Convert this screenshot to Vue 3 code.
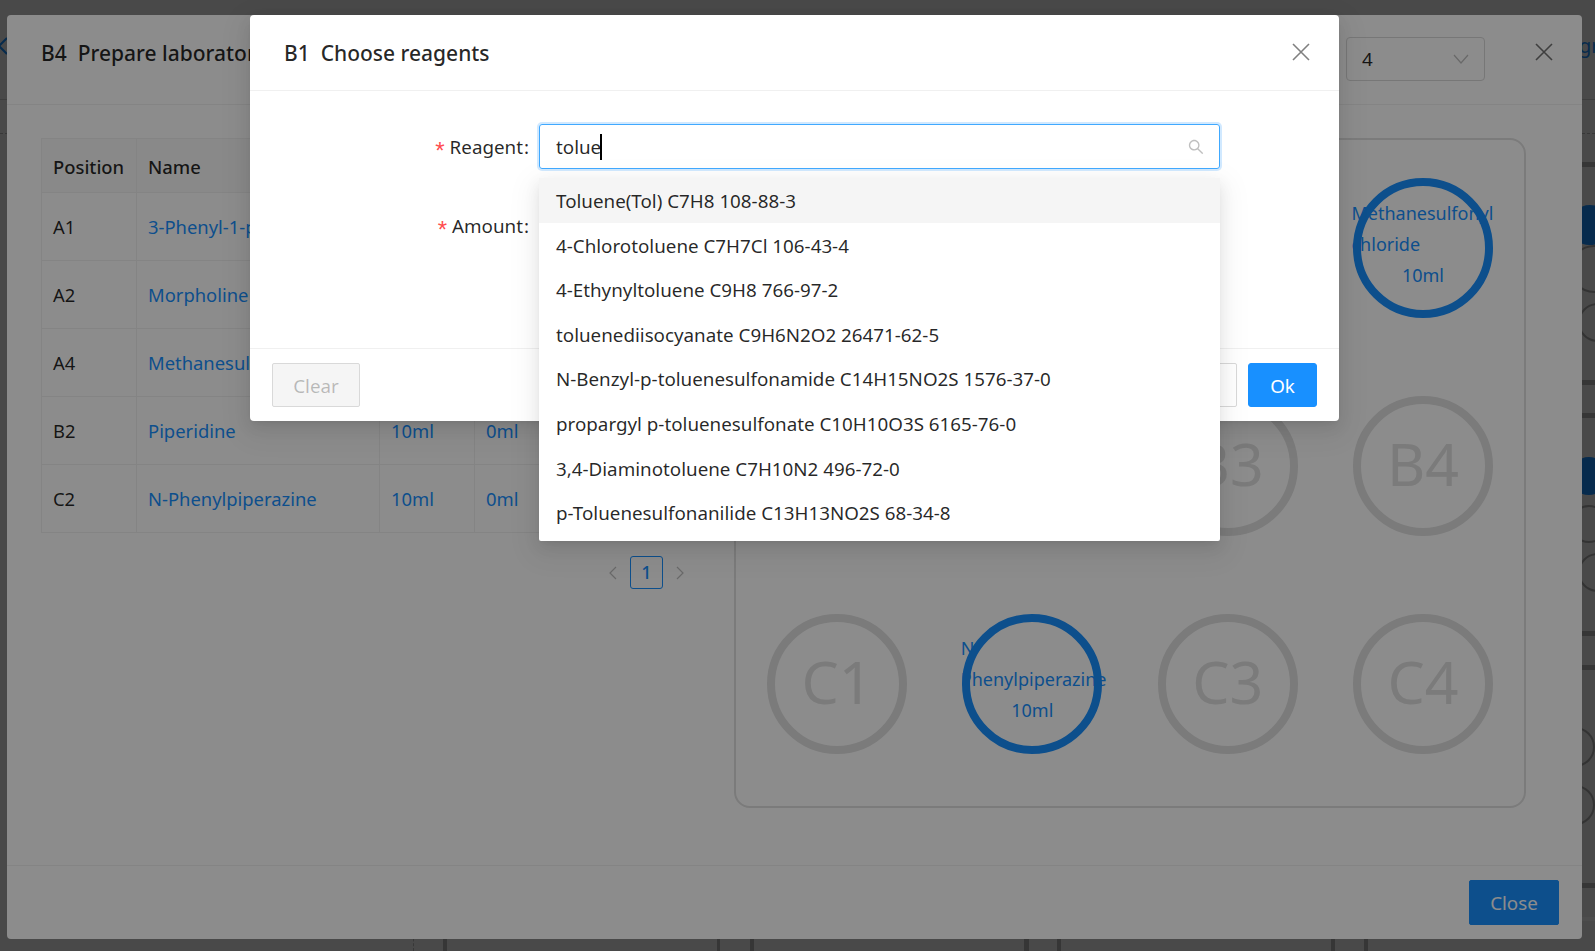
<template>
  <div class="page">
    <!-- page behind the dialogs, only its edges show -->
    <div class="flow">
      <span class="flow-back">
        <svg width="12" height="20" viewBox="0 0 12 20"><polyline points="10,2 2,10 10,18" fill="none" stroke="#1890ff" stroke-width="2" /></svg>
      </span>
      <span class="flow-link">Program</span>
      <div class="flow-line" />
      <div class="flow-dash" />
      <div class="flow-dash-v" />
      <div class="flow-band" />
      <div v-for="(b, i) in bars" :key="'b' + i" class="flow-bar" :style="{ left: b[0] + 'px', top: b[1] + 'px', width: b[2] + 'px', height: b[3] + 'px' }" />
      <div v-for="(d, i) in dots" :key="'d' + i" class="flow-dot" :class="{ on: d[2] }" :style="{ left: d[0] + 'px', top: d[1] + 'px', width: d[3] + 'px', height: d[3] + 'px' }" />
    </div>
    <div class="mask" />

    <div class="modal outer">
      <div class="outer-head">
        <div class="title">B4&nbsp; Prepare laboratory reagents</div>
        <div class="select">
          <span>4</span>
          <svg width="16" height="10" viewBox="0 0 16 10"><polyline points="1,1 8,9 15,1" fill="none" stroke="#bfbfbf" stroke-width="1.2" /></svg>
        </div>
        <svg class="close" width="18" height="18" viewBox="0 0 18 18"><path d="M1 1 L17 17 M17 1 L1 17" stroke="#737373" stroke-width="1.6" fill="none" /></svg>
      </div>
      <div class="outer-body">
        <div class="left">
          <table class="table">
            <thead>
              <tr>
                <th class="c1">Position</th>
                <th class="c2">Name</th>
                <th class="c3">Total</th>
                <th class="c3">Used</th>
                <th>Action</th>
              </tr>
            </thead>
            <tbody>
              <tr v-for="r in rows" :key="r.pos">
                <td>{{ r.pos }}</td>
                <td class="link">{{ r.name }}</td>
                <td class="link">10ml</td>
                <td class="link">0ml</td>
                <td class="link">Edit</td>
              </tr>
            </tbody>
          </table>
          <div class="pager">
            <svg width="12" height="14" viewBox="0 0 12 14"><polyline points="9,1 3,7 9,13" fill="none" stroke="#bfbfbf" stroke-width="1.2" /></svg>
            <span class="pager-item">1</span>
            <svg width="12" height="14" viewBox="0 0 12 14"><polyline points="3,1 9,7 3,13" fill="none" stroke="#bfbfbf" stroke-width="1.2" /></svg>
          </div>
        </div>
        <div class="plate">
          <div v-for="w in wells" :key="w.pos" class="well" :class="{ filled: w.name }">
            <template v-if="w.name">
              <div class="well-name">{{ w.name }}</div>
              <div class="well-vol">10ml</div>
            </template>
            <span v-else class="well-pos">{{ w.pos }}</span>
          </div>
        </div>
      </div>
      <div class="outer-foot">
        <button class="btn primary">Close</button>
      </div>
    </div>

    <div class="mask" />

    <div class="modal inner">
      <div class="inner-head">
        <div class="title">B1&nbsp; Choose reagents</div>
        <svg class="close" width="18" height="18" viewBox="0 0 18 18"><path d="M1 1 L17 17 M17 1 L1 17" stroke="#808080" stroke-width="1.6" fill="none" /></svg>
      </div>
      <div class="form">
        <label class="form-label"><i>*</i>Reagent<b>:</b></label>
        <div class="input focus">
          <span>tolue</span><span class="caret" />
          <svg class="search" width="16" height="16" viewBox="64 64 896 896" fill="#bfbfbf">
            <path d="M909.6 854.5L649.9 594.8C690.2 542.7 712 479 712 412c0-80.2-31.3-155.4-87.9-212.1-56.6-56.7-132-87.9-212.1-87.9s-155.5 31.3-212.1 87.9C143.2 256.5 112 331.8 112 412c0 80.1 31.3 155.5 87.9 212.1C256.5 680.8 331.8 712 412 712c67 0 130.6-21.8 182.7-62l259.7 259.6a8.2 8.2 0 0 0 11.6 0l43.6-43.5a8.2 8.2 0 0 0 0-11.6zM570.4 570.4C528 612.7 471.8 636 412 636s-116-23.3-158.4-65.6C211.3 528 188 471.8 188 412s23.3-116.1 65.6-158.4C296 211.3 352.2 188 412 188s116.1 23.2 158.4 65.6S636 352.2 636 412s-23.3 116.1-65.6 158.4z" />
          </svg>
        </div>
        <label class="form-label"><i>*</i>Amount<b>:</b></label>
        <div class="input" />
      </div>
      <div class="inner-foot">
        <button class="btn disabled">Clear</button>
        <div class="foot-right">
          <button class="btn">Cancel</button>
          <button class="btn ok">Ok</button>
        </div>
      </div>
    </div>

    <div class="dropdown">
      <div v-for="(o, i) in options" :key="o" class="option" :class="{ active: i === 0 }">{{ o }}</div>
    </div>
  </div>
</template>

<script setup>
const rows = [
  { pos: 'A1', name: '3-Phenyl-1-propanol' },
  { pos: 'A2', name: 'Morpholine' },
  { pos: 'A4', name: 'Methanesulfonyl chloride' },
  { pos: 'B2', name: 'Piperidine' },
  { pos: 'C2', name: 'N-Phenylpiperazine' }
]

const wells = ['A', 'B', 'C'].flatMap((l) =>
  [1, 2, 3, 4].map((n) => {
    const pos = l + n
    const row = rows.find((r) => r.pos === pos)
    return { pos, name: row ? row.name : '' }
  })
)

const options = [
  'Toluene(Tol) C7H8 108-88-3',
  '4-Chlorotoluene C7H7Cl 106-43-4',
  '4-Ethynyltoluene C9H8 766-97-2',
  'toluenediisocyanate C9H6N2O2 26471-62-5',
  'N-Benzyl-p-toluenesulfonamide C14H15NO2S 1576-37-0',
  'propargyl p-toluenesulfonate C10H10O3S 6165-76-0',
  '3,4-Diaminotoluene C7H10N2 496-72-0',
  'p-Toluenesulfonanilide C13H13NO2S 68-34-8'
]

// connector bars of the flow chart behind the dialogs: left, top, width, height
const bars = [
  [1582, 162, 13, 5], [1582, 380, 13, 5], [1582, 413, 13, 5],
  [1582, 631, 13, 5], [1582, 665, 13, 5], [1582, 883, 13, 5],
  [443, 939, 4, 12], [717, 939, 3, 12], [750, 939, 4, 12],
  [1024, 939, 5, 12], [1057, 939, 4, 12], [1331, 939, 4, 12], [1364, 939, 4, 12]
]
// left, top, filled, diameter
const dots = [
  [1570, 205, true, 40], [1570, 457, true, 38],
  [1570, 245, false, 48], [1578, 303, false, 39],
  [1570, 505, false, 38], [1578, 553, false, 39],
  [1555, 727, false, 40], [1555, 785, false, 40]
]
</script>

<style>
html, body {
  margin: 0;
  background: #fff;
}
</style>

<style scoped>
.page {
  position: relative;
  width: 1595px;
  height: 951px;
  overflow: hidden;
  background: #f2f2f2;
  font-family: "Noto Sans", "Open Sans", sans-serif;
  font-size: 18.8px;
  color: rgba(0, 0, 0, 0.85);
}

.flow {
  position: absolute;
  inset: 0;
}
.flow-back {
  position: absolute;
  left: -3px;
  top: 36px;
}
.flow-link {
  position: absolute;
  left: 1547px;
  top: 32px;
  font-size: 20px;
  color: #1890ff;
  white-space: nowrap;
}
.flow-line {
  position: absolute;
  left: 0;
  right: 0;
  top: 99px;
  height: 1px;
  background: #d0d0d0;
}
.flow-dash {
  position: absolute;
  left: 0;
  right: 0;
  top: 133px;
  border-top: 1px dashed #bbb;
}
.flow-dash-v {
  position: absolute;
  left: 413px;
  top: 900px;
  bottom: 0;
  border-left: 1px dashed #bbb;
}
.flow-band {
  position: absolute;
  left: 1582px;
  right: 0;
  top: 917px;
  height: 4px;
  background: #fff;
}
.flow-bar {
  position: absolute;
  background: #b4b4b4;
}
.flow-dot {
  position: absolute;
  box-sizing: border-box;
  border: 2px solid #aaa;
  border-radius: 50%;
}
.flow-dot.on {
  background: #1890ff;
  border-color: #1890ff;
}

.mask {
  position: absolute;
  inset: 0;
  background: rgba(0, 0, 0, 0.45);
}

.modal {
  position: absolute;
  top: 15px;
  display: flex;
  flex-direction: column;
  background: #fff;
  border-radius: 4px;
}

.outer {
  left: 7px;
  width: 1575px;
  height: 924px;
}
.outer-head {
  display: flex;
  align-items: center;
  height: 89px;
  padding: 0 29px 0 34px;
  border-bottom: 1px solid #f0f0f0;
}
.outer-head .title {
  flex: 1;
  margin-top: -13px;
}
.title {
  font-size: 21px;
  font-weight: 500;
  white-space: nowrap;
}
.close {
  flex: none;
}
.outer-head .close {
  margin-top: -16px;
}
.inner-head .close {
  margin-top: -2px;
}
.select {
  box-sizing: border-box;
  display: flex;
  align-items: center;
  justify-content: space-between;
  width: 139px;
  height: 44px;
  padding: 0 15px;
  margin-top: -1px;
  margin-right: 50px;
  border: 1px solid #d9d9d9;
  border-radius: 4px;
}

.outer-body {
  flex: 1;
  display: flex;
  justify-content: space-between;
  padding: 33px 56px 0 34px;
  min-height: 0;
}
.left {
  width: 661px;
}
.table {
  width: 100%;
  border-collapse: collapse;
  table-layout: fixed;
  border: 1px solid #f0f0f0;
  font-size: 18.4px;
}
.table th,
.table td {
  box-sizing: border-box;
  padding: 0 11px;
  border: 1px solid #f0f0f0;
  text-align: left;
  white-space: nowrap;
  overflow: hidden;
}
.table th {
  height: 54px;
  padding-top: 2px;
  background: #fafafa;
  font-weight: 500;
}
.table td {
  height: 68px;
}
.c1 {
  width: 95px;
}
.c2 {
  width: 243px;
}
.c3 {
  width: 95px;
}
.link {
  color: #1890ff;
}
.pager {
  display: flex;
  align-items: center;
  justify-content: flex-end;
  gap: 11px;
  margin-top: 23px;
  padding-right: 16px;
}
.pager-item {
  box-sizing: border-box;
  width: 33px;
  height: 33px;
  border: 1px solid #1890ff;
  border-radius: 3px;
  color: #1890ff;
  font-size: 18px;
  font-weight: 500;
  line-height: 31px;
  text-align: center;
}

.plate {
  box-sizing: border-box;
  display: grid;
  grid-template-columns: repeat(4, 140px);
  grid-auto-rows: 140px;
  justify-content: space-between;
  row-gap: 77.8px;
  width: 792px;
  height: 670px;
  padding: 38px 31px 0;
  border: 2px solid #e0e0e0;
  border-radius: 16px;
}
.well {
  position: relative;
  box-sizing: border-box;
  display: flex;
  flex-direction: column;
  align-items: center;
  justify-content: center;
  padding-bottom: 6px;
  font-size: 59px;
  color: #e0e0e0;
}
.well::after {
  content: "";
  position: absolute;
  inset: 0;
  box-sizing: border-box;
  border: 8px solid #e0e0e0;
  border-radius: 50%;
}
.well.filled {
  padding-bottom: 8px;
  font-size: 18px;
  line-height: 31px;
  color: #1890ff;
}
.well.filled::after {
  border-color: #1890ff;
}
.well-name {
  width: 100%;
  margin-left: -3px;
  overflow-wrap: normal;
}
.well-vol {
  text-align: center;
}

.outer-foot {
  display: flex;
  justify-content: flex-end;
  align-items: center;
  height: 74px;
  padding: 0 23px 1px;
  box-sizing: border-box;
  border-top: 1px solid #f0f0f0;
}

.btn {
  box-sizing: border-box;
  height: 44px;
  padding: 2px 21px 0;
  border: 1px solid #d9d9d9;
  border-radius: 2px;
  background: #fff;
  color: rgba(0, 0, 0, 0.85);
  font: inherit;
}
.btn.primary,
.btn.ok {
  border-color: #1890ff;
  background: #1890ff;
  color: #fff;
}
.btn.primary {
  width: 90px;
  height: 45px;
  padding: 2px 0 0;
}
.btn.ok {
  width: 69px;
  padding: 2px 0 0;
  border-radius: 3px;
}
.btn.disabled {
  width: 88px;
  padding: 2px 0 0;
  background: #f5f5f5;
  color: rgba(0, 0, 0, 0.25);
}

.inner {
  left: 250px;
  width: 1089px;
  height: 406px;
  box-shadow: 0 3px 6px -4px rgba(0, 0, 0, 0.12), 0 6px 16px rgba(0, 0, 0, 0.08), 0 9px 28px 8px rgba(0, 0, 0, 0.05);
}
.inner-head {
  display: flex;
  align-items: center;
  justify-content: space-between;
  height: 75px;
  padding: 0 29px 0 34px;
  border-bottom: 1px solid #f0f0f0;
}
.form {
  flex: 1;
  display: grid;
  grid-template-columns: 279px 681px;
  grid-auto-rows: 45px;
  column-gap: 10px;
  row-gap: 34px;
  padding-top: 33px;
}
.form-label {
  display: flex;
  align-items: center;
  justify-content: flex-end;
}
.form-label i {
  margin-right: 5px;
  font-style: normal;
  font-family: "Liberation Sans", sans-serif;
  font-size: 24px;
  line-height: 1;
  transform: translateY(4px);
  color: #ff4d4f;
}
.form-label b {
  margin-left: 1px;
  font-weight: 400;
}
.input {
  position: relative;
  box-sizing: border-box;
  display: flex;
  align-items: center;
  padding: 0 16px;
  border: 1px solid #d9d9d9;
  border-radius: 3px;
}
.input.focus {
  border-color: #40a9ff;
  box-shadow: 0 0 0 2px rgba(24, 144, 255, 0.2);
}
.caret {
  width: 2px;
  height: 26px;
  margin-left: -1px;
  background: #000;
}
.search {
  position: absolute;
  right: 15px;
  top: 14px;
}
.inner-foot {
  box-sizing: border-box;
  display: flex;
  justify-content: space-between;
  height: 73px;
  padding: 14px 22px 0;
  border-top: 1px solid #f0f0f0;
}
.foot-right {
  display: flex;
  gap: 11px;
}

.dropdown {
  position: absolute;
  left: 539px;
  top: 178px;
  box-sizing: border-box;
  width: 681px;
  height: 363px;
  background: #fff;
  border-radius: 0 0 2px 2px;
  box-shadow: 0 3px 6px -4px rgba(0, 0, 0, 0.12), 0 6px 16px rgba(0, 0, 0, 0.08), 0 9px 28px 8px rgba(0, 0, 0, 0.05);
}
.option {
  height: 44.6px;
  padding: 0 17px;
  line-height: 46px;
  white-space: nowrap;
}
.option.active {
  background: #f5f5f5;
}
</style>
